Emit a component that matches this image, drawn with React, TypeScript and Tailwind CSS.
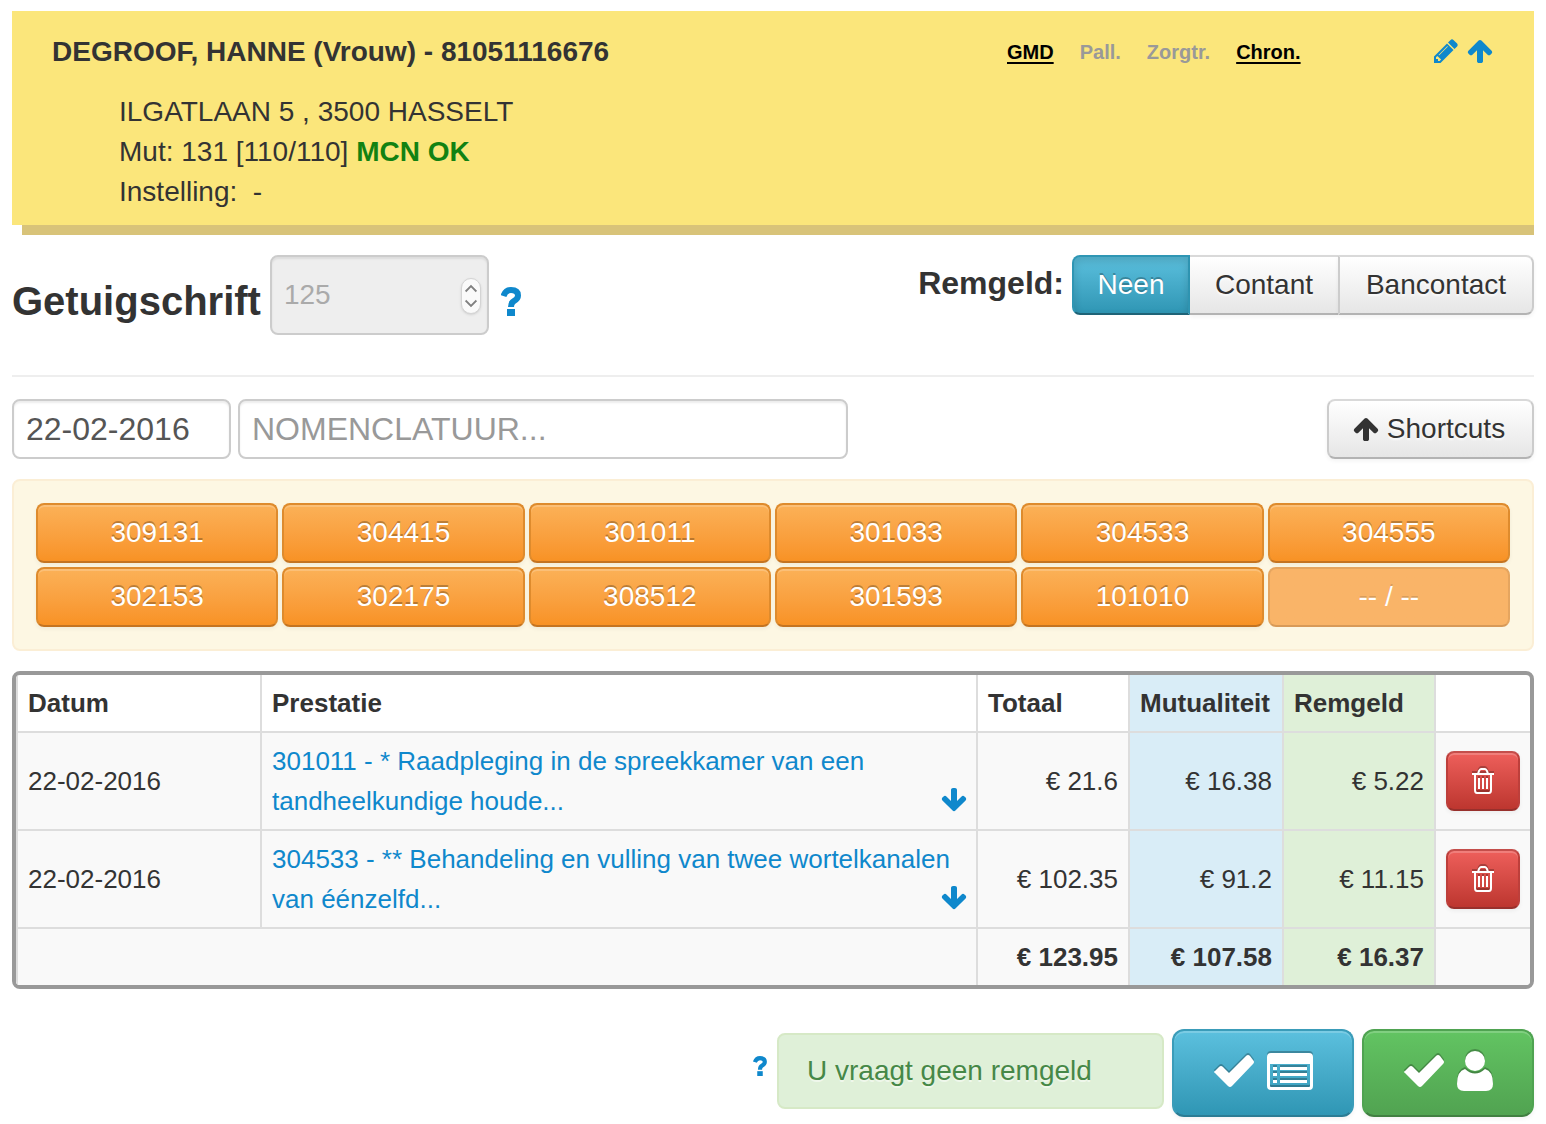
import React, { useState } from 'react';

const ARROW_UP =
  'M1675 971q0 51-37 90l-75 75q-38 38-91 38-54 0-90-38l-294-293v704q0 52-37.5 84.5t-90.5 32.5h-128q-53 0-90.5-32.5t-37.5-84.5v-704l-294 293q-36 38-90 38t-90-38l-75-75q-38-38-38-90 0-53 38-91l651-651q35-37 90-37 54 0 91 37l651 651q37 39 37 91z';
const ARROW_DOWN =
  'M1675 832q0 53-37 90l-651 652q-39 37-91 37-53 0-90-37l-651-652q-38-36-38-90 0-53 38-91l74-75q39-37 91-37 53 0 90 37l294 294v-704q0-52 38-90t90-38h128q52 0 90 38t38 90v704l294-294q37-37 90-37 52 0 91 37l75 75q37 39 37 91z';
const PENCIL =
  'M491 1536l91-91-235-235-91 91v107h128v128h107zm523-928q0-22-22-22-10 0-17 7l-542 542q-7 7-7 17 0 22 22 22 10 0 17-7l542-542q7-7 7-17zm-54-192l416 416-832 832h-416v-416zm683 96q0 53-37 90l-166 166-416-416 166-165q36-38 90-38 53 0 91 38l235 234q37 39 37 91z';

function Glyph({ d, className }: { d: string; className: string }) {
  return (
    <svg viewBox="0 0 1792 1792" fill="currentColor" aria-hidden="true" className={className}>
      <path d={d} />
    </svg>
  );
}

function HelpIcon({ className }: { className: string }) {
  return (
    <svg viewBox="0 0 20 29" fill="none" stroke="currentColor" strokeWidth="6" aria-hidden="true" className={className}>
      <path d="M2.500 9Q4.500 3 10 3Q17 3 17 8.500Q17 12 13 14Q10 15.500 10 20" />
      <path d="M6 25.500H14" strokeWidth="7" />
    </svg>
  );
}

function TrashIcon() {
  return (
    <svg viewBox="0 0 22 26" fill="none" stroke="currentColor" strokeWidth="2" aria-hidden="true" className="h-[26px] w-[22px] drop-shadow-[0_-2px_0_rgba(0,0,0,0.25)]">
      <path d="M0 6H22" />
      <path d="M6 6L7 3Q8 1 9 1H13Q14 1 15 3L16 6" />
      <path d="M3 6V22Q3 25 5 25H17Q19 25 19 22V6" />
      <path d="M7 10V21M11 10V21M15 10V21" />
    </svg>
  );
}

function CheckIcon() {
  return (
    <svg viewBox="0 0 40 32" fill="currentColor" aria-hidden="true" className="h-8 w-10 drop-shadow-[0_-2px_0_rgba(0,0,0,0.25)]">
      <path d="M1 16L5 12Q7 10 9 12L15 18L32 1Q34 -1 36 1L39 5Q41 7 39 9L18 31Q16 33 14 31L1 18Q-1 17 1 16Z" />
    </svg>
  );
}

function ListIcon() {
  return (
    <svg viewBox="0 0 46 37" fill="currentColor" fillRule="evenodd" aria-hidden="true" className="h-[37px] w-[46px] drop-shadow-[0_-2px_0_rgba(0,0,0,0.25)]">
      <path d="M4 0H42Q46 0 46 4V33Q46 37 42 37H4Q0 37 0 33V4Q0 0 4 0ZM3 11V33Q3 34 4 34H42Q43 34 43 33V11Z" />
      <path d="M6 14H10V17H6ZM13 14H40V17H13ZM6 20H10V23H6ZM13 20H40V23H13ZM6 27H10V30H6ZM13 27H40V30H13Z" />
    </svg>
  );
}

function UserIcon() {
  return (
    <svg viewBox="0 0 36 40" fill="currentColor" aria-hidden="true" className="h-10 w-9 drop-shadow-[0_-2px_0_rgba(0,0,0,0.25)]">
      <circle cx="18" cy="10" r="10" />
      <path d="M8 18Q18 27 28 18Q36 20 36 33Q36 40 29 40H7Q0 40 0 33Q0 20 8 18Z" />
    </svg>
  );
}

const RAISED = 'shadow-[inset_0_2px_0_rgba(255,255,255,0.2),0_2px_4px_rgba(0,0,0,0.05)]';
const GREY =
  'border-[#cccccc] border-t-[#d9d9d9] border-b-[#b3b3b3] bg-linear-to-b from-white to-[#e6e6e6] text-[#333333] [text-shadow:0_2px_2px_rgba(255,255,255,0.75)]';
const TEAL_PRESSED =
  'border-[#2f96b4] border-b-[#1f6377] bg-linear-to-b from-[#5bc0de] to-[#2f96b4] text-white [text-shadow:0_-2px_0_rgba(0,0,0,0.25)] shadow-[inset_0_4px_8px_rgba(0,0,0,0.15)]';
const INPUT =
  'rounded-lg border-2 border-[#cccccc] shadow-[inset_0_2px_2px_rgba(0,0,0,0.075)] outline-none';

const PAYMENTS = [
  { label: 'Neen', shape: 'w-[118px] rounded-l-lg border-2' },
  { label: 'Contant', shape: 'w-[148px] border-y-2' },
  { label: 'Bancontact', shape: 'w-[196px] rounded-r-lg border-2' },
];

const CODES = ['309131', '304415', '301011', '301033', '304533', '304555', '302153', '302175', '308512', '301593', '101010', '-- / --'];

const ROWS = [
  { date: '22-02-2016', text: '301011 - * Raadpleging in de spreekkamer van een tandheelkundige houde...', total: '€ 21.6', mut: '€ 16.38', rem: '€ 5.22' },
  { date: '22-02-2016', text: '304533 - ** Behandeling en vulling van twee wortelkanalen van éénzelfd...', total: '€ 102.35', mut: '€ 91.2', rem: '€ 11.15' },
];

function Patient() {
  return (
    <section className="text-[28px] leading-10">
      <div className="bg-[#fbe67b] px-10 pt-[21px] pb-[13px]">
        <div className="flex items-center">
          <h1 className="flex-1 font-bold">DEGROOF, HANNE (Vrouw) - 81051116676</h1>
          <ul className="flex w-[425px] gap-[26px] text-[20px] font-bold text-[#999999]">
            <li className="text-black underline decoration-2 underline-offset-3">GMD</li>
            <li>Pall.</li>
            <li>Zorgtr.</li>
            <li className="text-black underline decoration-2 underline-offset-3">Chron.</li>
          </ul>
          <div className="flex gap-[6px] pb-[2px] text-[#0f88cc]">
            <button type="button" aria-label="Bewerken"><Glyph d={PENCIL} className="size-7" /></button>
            <button type="button" aria-label="Inklappen"><Glyph d={ARROW_UP} className="size-7" /></button>
          </div>
        </div>
        <div className="mt-5 pl-[67px]">
          <p>ILGATLAAN 5 , 3500 HASSELT</p>
          <p>Mut: 131 [110/110] <strong className="text-[#128212]">MCN OK</strong></p>
          <p>Instelling:&nbsp; -</p>
        </div>
      </div>
      <div className="ml-[10px] h-[10px] bg-[#d8c379]" />
    </section>
  );
}

function Certificate() {
  const [payment, setPayment] = useState('Neen');
  return (
    <section className="mt-5 flex items-start justify-between border-b-2 border-[#eeeeee] pb-10">
      <div className="flex items-center">
        <label htmlFor="number" className="pt-3 text-[40px] leading-10 font-bold">Getuigschrift</label>
        <div className="relative ml-[9px]">
          <input
            id="number"
            type="number"
            disabled
            defaultValue={125}
            className={`${INPUT} block h-20 w-[219px] [appearance:textfield] bg-[#eeeeee] px-3 text-[28px] text-[#aaaaaa]`}
          />
          <svg viewBox="0 0 20 36" fill="none" stroke="#808080" strokeWidth="2" aria-hidden="true" className="absolute top-[23px] right-2 h-9 w-5 rounded-full border border-[#d4d4d4] bg-[#fafafa] shadow-sm">
            <path d="M4 13L10 7L16 13M4 23L10 29L16 23" />
          </svg>
        </div>
        <button type="button" aria-label="Uitleg" className="ml-3 pt-3 text-[#0f88cc]">
          <HelpIcon className="h-[29px] w-5" />
        </button>
      </div>
      <div className="flex items-center">
        <span id="payment" className="mr-2 pb-1 text-[32px] font-bold">Remgeld:</span>
        <div role="group" aria-labelledby="payment" className="flex">
          {PAYMENTS.map(({ label, shape }) => (
            <button
              key={label}
              type="button"
              aria-pressed={payment === label}
              onClick={() => setPayment(label)}
              className={`${shape} ${payment === label ? TEAL_PRESSED : `${GREY} ${RAISED}`} h-[60px] text-[28px]`}
            >
              {label}
            </button>
          ))}
        </div>
      </div>
    </section>
  );
}

function Entry() {
  return (
    <section className="mt-[22px] flex items-center text-[32px]">
      <input aria-label="Datum" defaultValue="22-02-2016" className={`${INPUT} h-[60px] w-[219px] bg-white px-3 text-[#555555]`} />
      <input aria-label="Nomenclatuur" placeholder="NOMENCLATUUR..." className={`${INPUT} ml-[7px] h-[60px] w-[610px] bg-white px-3 placeholder:text-[#999999]`} />
      <button type="button" className={`${GREY} ${RAISED} ml-auto flex h-[60px] w-[207px] items-center justify-center gap-[7px] rounded-lg border-2 pr-1 text-[28px]`}>
        <Glyph d={ARROW_UP} className="size-7" />
        Shortcuts
      </button>
    </section>
  );
}

function Shortcuts() {
  return (
    <section className="mt-5 grid grid-cols-6 gap-1 rounded-lg border-2 border-[#fbeed5] bg-[#fdf7e3] p-[22px] text-[28px]">
      {CODES.map((code, i) => (
        <button
          key={code}
          type="button"
          disabled={i === CODES.length - 1}
          className={
            'h-[60px] rounded-lg border-2 border-[#de8b2d] border-b-[#c47421] bg-linear-to-b from-[#fbb157] to-[#f89224] text-white shadow-[inset_0_2px_0_rgba(255,255,255,0.2),0_2px_4px_rgba(0,0,0,0.05)] [text-shadow:0_-2px_0_rgba(0,0,0,0.25)] ' +
            'disabled:border-[#e5a55f] disabled:border-b-[#d89a58] disabled:from-[#f9b468] disabled:to-[#f9b468] disabled:shadow-none disabled:[text-shadow:0_-2px_0_rgba(0,0,0,0.12)]'
          }
        >
          {code}
        </button>
      ))}
    </section>
  );
}

const CELL = 'border-l-2 border-[#dddddd] px-[10px] py-2';
const BODY_CELL = 'border-t-2 border-l-2 border-[#dddddd] px-[10px] py-2';

function Services() {
  return (
    <div className="mt-5 overflow-hidden rounded-lg border-4 border-[#999999]">
      <table className="w-full table-fixed border-separate border-spacing-0 text-[26px] leading-10">
        <colgroup>
          <col className="w-[244px]" />
          <col />
          <col className="w-[152px]" />
          <col className="w-[154px]" />
          <col className="w-[152px]" />
          <col className="w-24" />
        </colgroup>
        <thead>
          <tr className="text-left whitespace-nowrap">
            <th className={CELL}>Datum</th>
            <th className={CELL}>Prestatie</th>
            <th className={CELL}>Totaal</th>
            <th className={`${CELL} bg-[#d9edf7]`}>Mutualiteit</th>
            <th className={`${CELL} bg-[#dff0d8]`}>Remgeld</th>
            <td className={CELL} />
          </tr>
        </thead>
        <tbody className="bg-[#f9f9f9]">
          {ROWS.map((row) => (
            <tr key={row.text} className="text-right">
              <td className={`${BODY_CELL} text-left`}>{row.date}</td>
              <td className={`${BODY_CELL} text-left text-[#0f88cc]`}>
                <a href="#detail">
                  {row.text}
                  <Glyph d={ARROW_DOWN} className="float-right mt-[5px] -mr-[2px] size-7" />
                </a>
              </td>
              <td className={BODY_CELL}>{row.total}</td>
              <td className={`${BODY_CELL} bg-[#d9edf7]`}>{row.mut}</td>
              <td className={`${BODY_CELL} bg-[#dff0d8]`}>{row.rem}</td>
              <td className={BODY_CELL}>
                <button
                  type="button"
                  aria-label="Verwijderen"
                  className={`${RAISED} flex h-[60px] w-full items-center justify-center rounded-lg border-2 border-[#bd3f3b] border-t-[#c44e4b] border-b-[#98302c] bg-linear-to-b from-[#ee5f5b] to-[#bd362f] text-white`}
                >
                  <TrashIcon />
                </button>
              </td>
            </tr>
          ))}
          <tr className="text-right font-bold">
            <td colSpan={2} className={BODY_CELL} />
            <td className={BODY_CELL}>€ 123.95</td>
            <td className={`${BODY_CELL} bg-[#d9edf7]`}>€ 107.58</td>
            <td className={`${BODY_CELL} bg-[#dff0d8]`}>€ 16.37</td>
            <td className={BODY_CELL} />
          </tr>
        </tbody>
      </table>
    </div>
  );
}

function Footer() {
  return (
    <footer className="mt-10 flex items-start justify-end gap-2">
      <button type="button" aria-label="Uitleg" className="mt-[27px] mr-[2px] text-[#0f88cc]">
        <HelpIcon className="h-5 w-[14px]" />
      </button>
      <p className="mt-1 flex h-[76px] w-[387px] items-center rounded-lg border-2 border-[#d6e9c6] bg-[#dff0d8] px-7 text-[28px] text-[#468847] [text-shadow:0_2px_0_rgba(255,255,255,0.5)]">
        U vraagt geen remgeld
      </p>
      <button type="button" aria-label="Bevestigen en lijst" className={`${RAISED} flex h-[88px] w-[182px] items-center justify-center gap-[13px] rounded-xl border-2 border-[#3a9cb9] border-b-[#2b7c94] bg-linear-to-b from-[#5bc0de] to-[#2f96b4] pb-1 text-white`}>
        <CheckIcon />
        <ListIcon />
      </button>
      <button type="button" aria-label="Bevestigen en patiënt" className={`${RAISED} flex h-[88px] w-[172px] items-center justify-center gap-[13px] rounded-xl border-2 border-[#4fa351] border-b-[#417f41] bg-linear-to-b from-[#62c462] to-[#51a351] pb-1 text-white`}>
        <CheckIcon />
        <UserIcon />
      </button>
    </footer>
  );
}

export default function App() {
  return (
    <main className="bg-white px-3 pt-[11px] pb-[7px] font-['Liberation_Sans',Arial,sans-serif] text-[#333333]">
      <Patient />
      <Certificate />
      <Entry />
      <Shortcuts />
      <Services />
      <Footer />
    </main>
  );
}
